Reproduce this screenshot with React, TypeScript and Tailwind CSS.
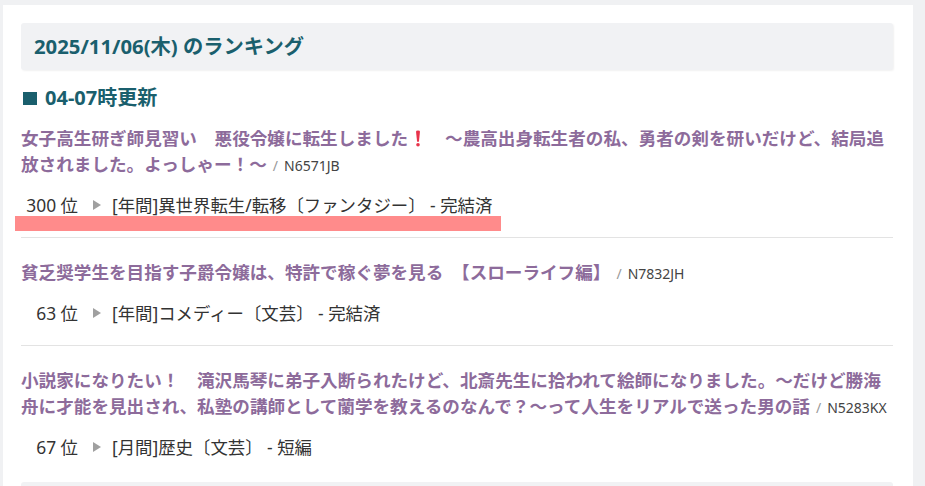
import React from "react"

type Item = {
  title: React.ReactNode
  code: string
  rank: string
  genre: string
  highlight?: boolean
}

// red "❗" mark drawn as svg so it does not depend on an emoji font
const RedMark = () => (
  <span className="inline-flex w-[1.1em] justify-center align-[-2px]">
    <svg width="6" height="17" viewBox="0 0 6 17">
      <path d="M1 1.5 Q1 0.5 3 0.5 Q5 0.5 5 1.5 L4 11 Q3.8 12 3 12 Q2.2 12 2 11 Z" fill="#e8334a" />
      <circle cx="3" cy="14.8" r="1.8" fill="#e8334a" />
    </svg>
  </span>
)

const items: Item[] = [
  {
    title: (
      <>
        {"女子高生研ぎ師見習い　悪役令嬢に転生しました"}
        <RedMark />
        {"　～農高出身転生者の私、勇者の剣を研いだけど、結局追放されました。よっしゃー！～"}
      </>
    ),
    code: "N6571JB",
    rank: "300 位",
    genre: "[年間]異世界転生/転移〔ファンタジー〕 - 完結済",
    highlight: true,
  },
  {
    title: "貧乏奨学生を目指す子爵令嬢は、特許で稼ぐ夢を見る　【スローライフ編】",
    code: "N7832JH",
    rank: "63 位",
    genre: "[年間]コメディー〔文芸〕 - 完結済",
  },
  {
    title:
      "小説家になりたい！　滝沢馬琴に弟子入断られたけど、北斎先生に拾われて絵師になりました。～だけど勝海舟に才能を見出され、私塾の講師として蘭学を教えるのなんで？～って人生をリアルで送った男の話",
    code: "N5283KX",
    rank: "67 位",
    genre: "[月間]歴史〔文芸〕 - 短編",
  },
]

const RankItem = ({ item, last }: { item: Item; last?: boolean }) => (
  <div className={last ? "" : "border-b border-[#e3e3e3] pb-[19px] mb-[21px]"}>
    <p className="text-[17.6px] leading-[26px] font-bold text-[#8d6b9b]">
      {item.title}
      <span className="ml-[6px] text-[14px] font-normal text-[#999]">/</span>
      <span className="ml-[6px] text-[14px] font-normal text-[#444]">{item.code}</span>
    </p>
    <div className="relative mt-[13px] flex items-center text-[17.4px] leading-[26px] text-[#333]">
      <span className="w-[57px] text-right">{item.rank}</span>
      <svg className="ml-[15px] mr-[11px]" width="8" height="10" viewBox="0 0 8 10">
        <path d="M0 0 L8 5 L0 10 Z" fill="#a0a0a0" />
      </svg>
      <span>{item.genre}</span>
      {item.highlight && (
        <div className="absolute left-[-6px] top-[24px] w-[486px] h-[15px] bg-[#ff8b8b]" />
      )}
    </div>
  </div>
)

export default function App() {
  return (
    <div
      className="h-[486px] overflow-hidden bg-[#f0f1f3] pt-[5px] pl-[3px] pr-[12px]"
      style={{ fontFamily: '"Noto Sans", "Noto Sans CJK JP", sans-serif' }}
    >
      <div className="bg-white pl-[18px] pr-[20px] pt-[18px] pb-8 h-[600px]">
        <div className="h-[47px] flex items-center pl-[13px] bg-[#f1f2f4] rounded-[3px] shadow-[1px_1px_2px_rgba(0,0,0,0.06)]">
          <h2 className="text-[20.3px] font-bold text-[#1a5f6d]">2025/11/06(木) のランキング</h2>
        </div>

        <h3 className="mt-[15px] mb-[14px] flex items-center text-[20px] leading-[26px] font-bold text-[#1a5f6d]">
          <span className="inline-block w-[14px] h-[13px] bg-[#1a5f6d] ml-[2px] mr-[8px]" />
          04-07時更新
        </h3>

        {items.map((item, i) => (
          <RankItem key={item.code} item={item} last={i === items.length - 1} />
        ))}

        <div className="mt-[22px] h-[47px] bg-[#f1f2f4] rounded-[3px]" />
      </div>
    </div>
  )
}
